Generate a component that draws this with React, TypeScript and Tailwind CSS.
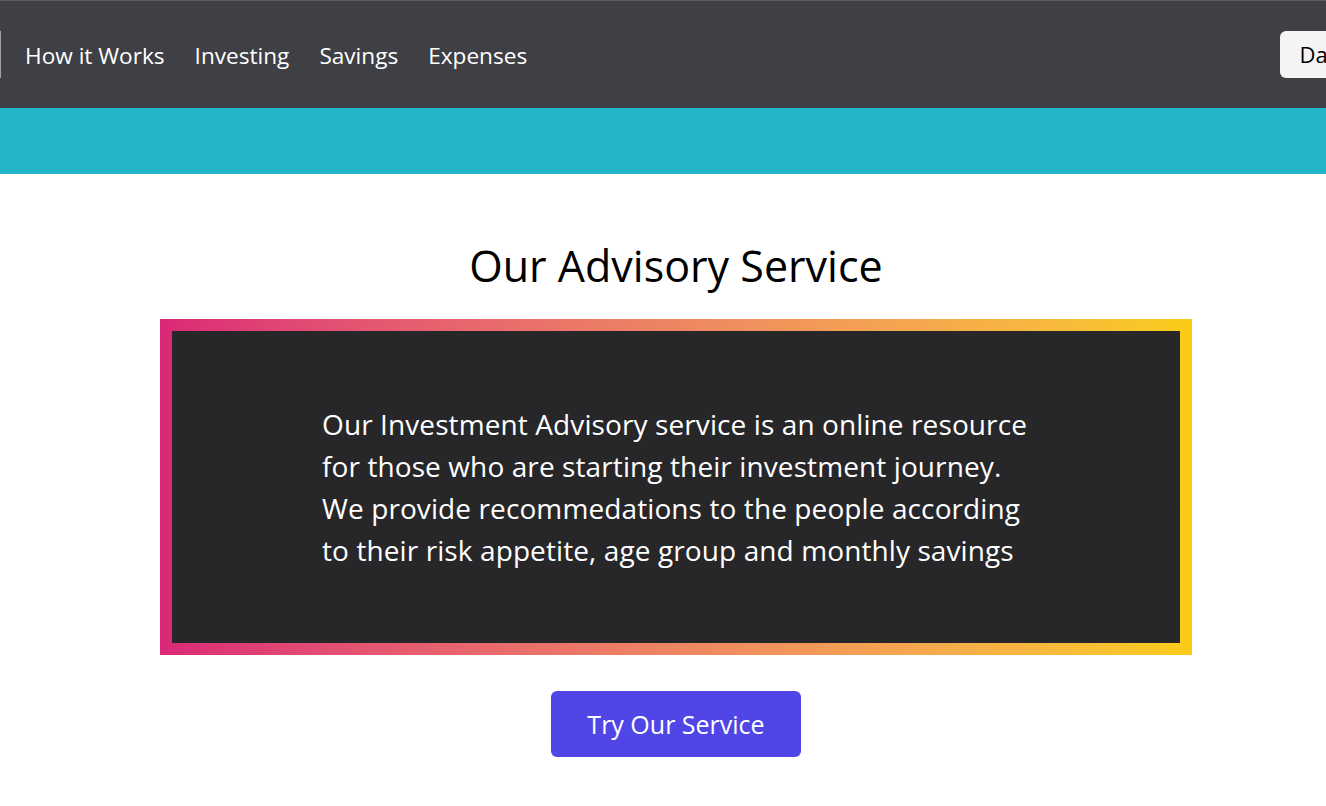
import React from "react";

export default function App() {
  const links = ["How it Works", "Investing", "Savings", "Expenses"];
  return (
    <div className="min-h-screen w-full overflow-hidden bg-white font-['Open_Sans',sans-serif]">
      <div className="w-[1352px]">
        <nav className="h-[108px] bg-[#3f3f46] border-t border-[#5c5c63] flex items-center pt-[2px]">
          <div className="w-px h-[47px] bg-[#a1a1aa] mb-[2px]" />
          <div className="ml-[24px] flex items-center gap-[30px] text-[22.6px] text-white">
            {links.map((l) => (
              <a key={l} className="leading-[32px]">
                {l}
              </a>
            ))}
          </div>
          <div className="ml-auto mr-[-80px] mb-[2px] shrink-0 h-[47px] rounded-md bg-[#f4f4f5] px-[19px] flex items-center text-[22px] text-black">
            Dashboard
          </div>
        </nav>
        <div className="h-[66px] bg-[#22b4c7]" />
        <main className="flex flex-col items-center pt-[61px] pb-[40px]">
          <h1 className="text-[43px] leading-[62px] text-black">Our Advisory Service</h1>
          <div className="mt-[22px] w-[1032px] p-[12px] bg-gradient-to-r from-[#db2777] to-[#facc15]">
            <div className="bg-[#27272a] px-[150px] py-[72px] text-white text-[28px] leading-[42px] tracking-[0.1px]">
              Our Investment Advisory service is an online resource for those who are starting their
              investment journey. We provide recommedations to the people according to their risk
              appetite, age group and monthly savings
            </div>
          </div>
          <button className="mt-[36px] rounded-md bg-[#4f46e5] px-9 py-3 text-[25px] leading-[42px] text-white">
            Try Our Service
          </button>
        </main>
      </div>
    </div>
  );
}
